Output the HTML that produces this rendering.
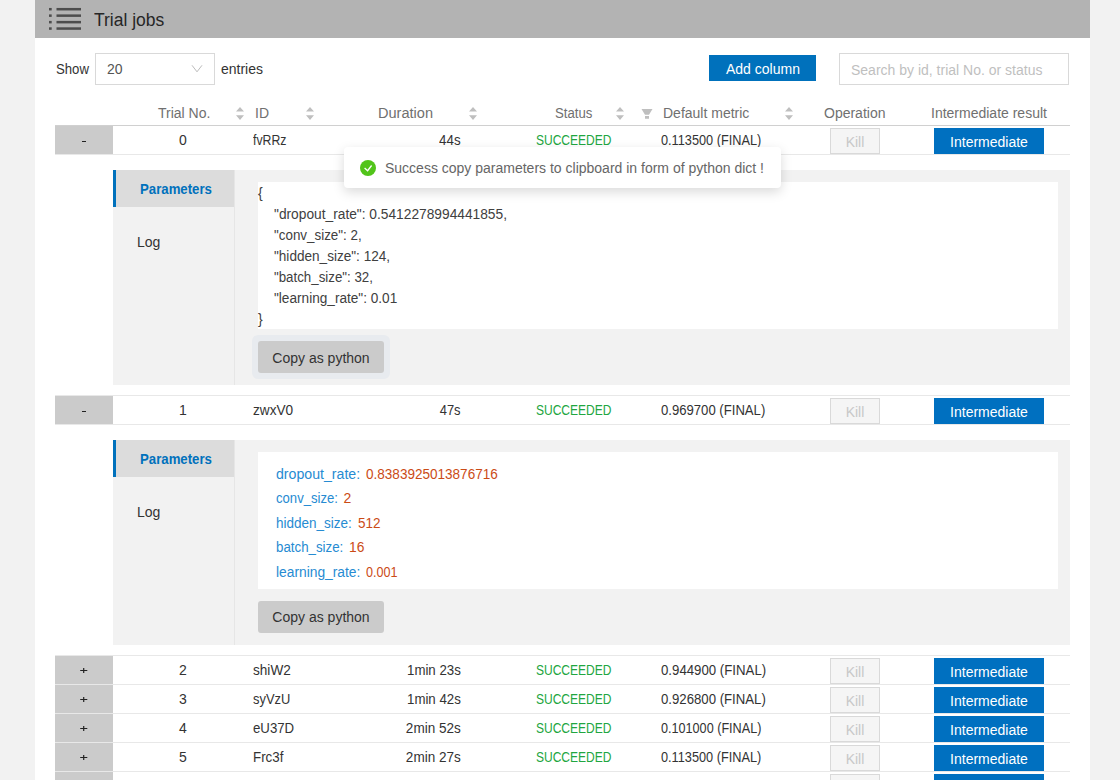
<!DOCTYPE html>
<html><head><meta charset="utf-8">
<style>
*{margin:0;padding:0;box-sizing:border-box}
html,body{width:1120px;height:780px;overflow:hidden;background:#f2f2f2;font-family:"Liberation Sans",sans-serif;font-size:14px;color:#333}
.a{position:absolute}
.t{position:absolute;white-space:nowrap;line-height:16px;font-size:14px}
.r{text-align:right}
#card{position:absolute;left:35px;top:0;width:1055px;height:780px;background:#fff}
#hdr{position:absolute;left:35px;top:0;width:1055px;height:38px;background:#b3b3b3}
.dot{position:absolute;left:49px;width:3px;height:3px;background:#555}
.ln{position:absolute;left:56px;width:25px;height:3px;background:#555}
.hb{position:absolute;left:55px;width:1015px;height:1px;background:#e8e8e8}
.ex{position:absolute;left:55px;width:58px;height:28px;background:#cbcbcb;text-align:center;line-height:28px;color:#333}
.kill{position:absolute;left:830px;width:50px;height:26px;border:1px solid #d9d9d9;background:#f5f5f5;color:#c8c8c8;text-align:center;line-height:26px;font-size:14px}
.imd{position:absolute;left:934px;width:110px;height:26px;background:#0070c0;color:#fff;text-align:center;line-height:28px;font-size:14px}
.sort{position:absolute;width:8px;height:13px}
.hd{color:#707070}
.succ{color:#21a640}
.panel{position:absolute;left:113px;width:957px;background:#f2f2f2}
.tabsel{position:absolute;left:0;top:0;width:121px;height:37px;background:#dcdcdc;border-left:3px solid #0071bc}
.tabsep{position:absolute;left:121px;top:0;width:1px;background:#e6e6e6}
.cbox{position:absolute;left:145px;width:800px;background:#fff}
.copy{position:absolute;left:145px;width:126px;height:32px;background:#cbcbcb;border-radius:3px;color:#333;text-align:center;line-height:34px}
.k{color:#268bd2}.v{color:#cb4b16}
</style></head><body>
<div id="card"></div>
<div id="hdr"></div>

<svg class="a" style="left:45px;top:0px" width="40" height="36" viewBox="0 0 40 36"><g fill="#4d4d4d"><rect x="4" y="7.95" width="2.7" height="2.5"/><rect x="11.5" y="7.95" width="24.5" height="2.5"/><rect x="4" y="14.40" width="2.7" height="2.5"/><rect x="11.5" y="14.40" width="24.5" height="2.5"/><rect x="4" y="20.90" width="2.7" height="2.5"/><rect x="11.5" y="20.90" width="24.5" height="2.5"/><rect x="4" y="27.30" width="2.7" height="2.5"/><rect x="11.5" y="27.30" width="24.5" height="2.5"/></g></svg>
<div class="t" style="left:94.4px;top:10px;font-size:18px;line-height:20px;color:#262626"><span style="display:inline-block;transform:scaleX(0.972);transform-origin:left">Trial jobs</span></div>
<div class="t" style="left:56px;top:61px"><span style="display:inline-block;transform:scaleX(0.94);transform-origin:left">Show</span></div>
<div class="a" style="left:95px;top:53px;width:120px;height:32px;border:1px solid #d9d9d9;background:#fff"></div>
<div class="t" style="left:107px;top:61px;color:#555">20</div>
<svg class="a" style="left:191px;top:65px" width="12" height="8" viewBox="0 0 12 8"><path d="M1 0.3 L6 6.8 L11 0.3" fill="none" stroke="#bbb" stroke-width="1"/></svg>
<div class="t" style="left:221px;top:61px">entries</div>
<div class="a" style="left:709px;top:55px;width:107px;height:26px;background:#0071bc"></div>
<div class="t" style="left:726px;top:61px;color:#fff">Add column</div>
<div class="a" style="left:839px;top:53px;width:230px;height:32px;border:1px solid #d9d9d9;background:#fff"></div>
<div class="t" style="left:851px;top:62px;color:#bfbfbf">Search by id, trial No. or status</div>
<div class="t hd" style="left:158px;top:105px">Trial No.</div>
<div class="t hd" style="left:255px;top:105px">ID</div>
<div class="t hd" style="left:378px;top:105px"><span style="display:inline-block;transform:scaleX(1.04);transform-origin:left">Duration</span></div>
<div class="t hd" style="left:555px;top:105px"><span style="display:inline-block;transform:scaleX(0.94);transform-origin:left">Status</span></div>
<div class="t hd" style="left:663px;top:105px">Default metric</div>
<div class="t hd" style="left:824px;top:105px">Operation</div>
<div class="t hd" style="left:931px;top:105px">Intermediate result</div>
<svg class="sort" style="left:236px;top:107px" viewBox="0 0 8 13"><path d="M4 0 L8 4.6 L0 4.6Z M4 13 L8 8.3 L0 8.3Z" fill="#bfbfbf"/></svg>
<svg class="sort" style="left:306px;top:107px" viewBox="0 0 8 13"><path d="M4 0 L8 4.6 L0 4.6Z M4 13 L8 8.3 L0 8.3Z" fill="#bfbfbf"/></svg>
<svg class="sort" style="left:468.5px;top:107px" viewBox="0 0 8 13"><path d="M4 0 L8 4.6 L0 4.6Z M4 13 L8 8.3 L0 8.3Z" fill="#bfbfbf"/></svg>
<svg class="sort" style="left:616px;top:107px" viewBox="0 0 8 13"><path d="M4 0 L8 4.6 L0 4.6Z M4 13 L8 8.3 L0 8.3Z" fill="#bfbfbf"/></svg>
<svg class="sort" style="left:784.5px;top:107px" viewBox="0 0 8 13"><path d="M4 0 L8 4.6 L0 4.6Z M4 13 L8 8.3 L0 8.3Z" fill="#bfbfbf"/></svg>
<svg class="a" style="left:641px;top:109px" width="12" height="10" viewBox="0 0 12 10"><path d="M0.5 0 H11.5 L8 5.7 H4Z M4 7 H8 V9.8 H4Z" fill="#bfbfbf"/></svg>
<div class="hb" style="top:125px;background:#d0d0d0"></div>

<div class="ex" style="top:126px"></div>
<div class="a" style="left:82px;top:141px;width:4px;height:1px;background:#222"></div>
<div class="t" style="left:113px;width:140px;text-align:center;top:132px">0</div>
<div class="t" style="left:253px;top:132px"><span style="display:inline-block;transform:scaleX(0.878);transform-origin:left">fvRRz</span></div>
<div class="t r" style="left:361px;width:100px;top:132px"><span style="display:inline-block;transform:scaleX(0.952);transform-origin:right">44s</span></div>
<div class="t succ" style="left:536px;top:132px"><span style="display:inline-block;transform:scaleX(0.858);transform-origin:left">SUCCEEDED</span></div>
<div class="t" style="left:661px;top:132px"><span style="display:inline-block;transform:scaleX(0.91);transform-origin:left">0.113500 (FINAL)</span></div>
<div class="kill" style="top:128px">Kill</div>
<div class="imd" style="top:128px">Intermediate</div>
<div class="hb" style="top:154px"></div>
<div class="panel" style="top:170px;height:215px">
  <div class="tabsel"></div>
  <div class="tabsep" style="height:215px"></div>
  <div class="cbox" style="top:12px;height:147px"></div>
  <div class="a" style="left:139px;top:165px;width:138px;height:44px;background:#e8ebef;border-radius:6px"></div>
  <div class="copy" style="top:171px">Copy as python</div>
</div>
<div class="t" style="left:140px;top:181px;color:#0071bc;font-weight:bold"><span style="display:inline-block;transform:scaleX(0.943);transform-origin:left">Parameters</span></div>
<div class="t" style="left:137px;top:234px">Log</div>
<div class="t" style="left:258px;top:185px;color:#404040">{</div>
<div class="t" style="left:274px;top:206px;color:#404040"><span style="display:inline-block;transform:scaleX(0.982);transform-origin:left">"dropout_rate": 0.5412278994441855,</span></div>
<div class="t" style="left:274px;top:227px;color:#404040"><span style="display:inline-block;transform:scaleX(0.956);transform-origin:left">"conv_size": 2,</span></div>
<div class="t" style="left:274px;top:248px;color:#404040"><span style="display:inline-block;transform:scaleX(0.97);transform-origin:left">"hidden_size": 124,</span></div>
<div class="t" style="left:274px;top:269px;color:#404040"><span style="display:inline-block;transform:scaleX(0.95);transform-origin:left">"batch_size": 32,</span></div>
<div class="t" style="left:274px;top:290px;color:#404040"><span style="display:inline-block;transform:scaleX(0.973);transform-origin:left">"learning_rate": 0.01</span></div>
<div class="t" style="left:258px;top:311px;color:#404040">}</div>
<div class="hb" style="top:395px"></div>
<div class="ex" style="top:396px"></div>
<div class="a" style="left:82px;top:411px;width:4px;height:1px;background:#222"></div>
<div class="t" style="left:113px;width:140px;text-align:center;top:402px">1</div>
<div class="t" style="left:253px;top:402px"><span style="display:inline-block;transform:scaleX(0.974);transform-origin:left">zwxV0</span></div>
<div class="t r" style="left:361px;width:100px;top:402px"><span style="display:inline-block;transform:scaleX(0.924);transform-origin:right">47s</span></div>
<div class="t succ" style="left:536px;top:402px"><span style="display:inline-block;transform:scaleX(0.858);transform-origin:left">SUCCEEDED</span></div>
<div class="t" style="left:661px;top:402px"><span style="display:inline-block;transform:scaleX(0.937);transform-origin:left">0.969700 (FINAL)</span></div>
<div class="kill" style="top:398px">Kill</div>
<div class="imd" style="top:398px">Intermediate</div>
<div class="hb" style="top:424px"></div>
<div class="panel" style="top:440px;height:205px">
  <div class="tabsel"></div>
  <div class="tabsep" style="height:205px"></div>
  <div class="cbox" style="top:12px;height:137px"></div>
  <div class="copy" style="top:161px;line-height:32px">Copy as python</div>
</div>
<div class="t" style="left:140px;top:451px;color:#0071bc;font-weight:bold"><span style="display:inline-block;transform:scaleX(0.943);transform-origin:left">Parameters</span></div>
<div class="t" style="left:137px;top:504px">Log</div>
<div class="t k" style="left:276px;top:466.0px"><span style="display:inline-block;transform:scaleX(1.01);transform-origin:left">dropout_rate:</span></div>
<div class="t v" style="left:366px;top:466.0px"><span style="display:inline-block;transform:scaleX(0.967);transform-origin:left">0.8383925013876716</span></div>
<div class="t k" style="left:276px;top:490.4px"><span style="display:inline-block;transform:scaleX(0.936);transform-origin:left">conv_size:</span></div>
<div class="t v" style="left:343.5px;top:490.4px"><span style="display:inline-block;transform:scaleX(1);transform-origin:left">2</span></div>
<div class="t k" style="left:276px;top:514.8px"><span style="display:inline-block;transform:scaleX(0.965);transform-origin:left">hidden_size:</span></div>
<div class="t v" style="left:357.5px;top:514.8px"><span style="display:inline-block;transform:scaleX(0.963);transform-origin:left">512</span></div>
<div class="t k" style="left:276px;top:539.2px"><span style="display:inline-block;transform:scaleX(0.95);transform-origin:left">batch_size:</span></div>
<div class="t v" style="left:348.8px;top:539.2px"><span style="display:inline-block;transform:scaleX(0.987);transform-origin:left">16</span></div>
<div class="t k" style="left:276px;top:563.6px"><span style="display:inline-block;transform:scaleX(0.985);transform-origin:left">learning_rate:</span></div>
<div class="t v" style="left:366px;top:563.6px"><span style="display:inline-block;transform:scaleX(0.901);transform-origin:left">0.001</span></div>
<div class="hb" style="top:655px"></div>
<div class="ex" style="top:656px"></div>
<svg class="a" style="left:78px;top:666px" width="12" height="10" viewBox="0 0 12 10"><rect x="2.2" y="4" width="7.1" height="1" fill="#222"/><rect x="5.1" y="2" width="1.2" height="5" fill="#222"/></svg>
<div class="t" style="left:113px;width:140px;text-align:center;top:662px">2</div>
<div class="t" style="left:253px;top:662px"><span style="display:inline-block;transform:scaleX(0.972);transform-origin:left">shiW2</span></div>
<div class="t r" style="left:361px;width:100px;top:662px"><span style="display:inline-block;transform:scaleX(0.947);transform-origin:right">1min 23s</span></div>
<div class="t succ" style="left:536px;top:662px"><span style="display:inline-block;transform:scaleX(0.858);transform-origin:left">SUCCEEDED</span></div>
<div class="t" style="left:661px;top:662px"><span style="display:inline-block;transform:scaleX(0.945);transform-origin:left">0.944900 (FINAL)</span></div>
<div class="kill" style="top:658px">Kill</div>
<div class="imd" style="top:658px">Intermediate</div>
<div class="hb" style="top:684px"></div>
<div class="hb" style="top:684px"></div>
<div class="ex" style="top:685px"></div>
<svg class="a" style="left:78px;top:695px" width="12" height="10" viewBox="0 0 12 10"><rect x="2.2" y="4" width="7.1" height="1" fill="#222"/><rect x="5.1" y="2" width="1.2" height="5" fill="#222"/></svg>
<div class="t" style="left:113px;width:140px;text-align:center;top:691px">3</div>
<div class="t" style="left:253px;top:691px"><span style="display:inline-block;transform:scaleX(0.921);transform-origin:left">syVzU</span></div>
<div class="t r" style="left:361px;width:100px;top:691px"><span style="display:inline-block;transform:scaleX(0.947);transform-origin:right">1min 42s</span></div>
<div class="t succ" style="left:536px;top:691px"><span style="display:inline-block;transform:scaleX(0.858);transform-origin:left">SUCCEEDED</span></div>
<div class="t" style="left:661px;top:691px"><span style="display:inline-block;transform:scaleX(0.942);transform-origin:left">0.926800 (FINAL)</span></div>
<div class="kill" style="top:687px">Kill</div>
<div class="imd" style="top:687px">Intermediate</div>
<div class="hb" style="top:713px"></div>
<div class="hb" style="top:713px"></div>
<div class="ex" style="top:714px"></div>
<svg class="a" style="left:78px;top:724px" width="12" height="10" viewBox="0 0 12 10"><rect x="2.2" y="4" width="7.1" height="1" fill="#222"/><rect x="5.1" y="2" width="1.2" height="5" fill="#222"/></svg>
<div class="t" style="left:113px;width:140px;text-align:center;top:720px">4</div>
<div class="t" style="left:253px;top:720px"><span style="display:inline-block;transform:scaleX(0.944);transform-origin:left">eU37D</span></div>
<div class="t r" style="left:361px;width:100px;top:720px"><span style="display:inline-block;transform:scaleX(0.967);transform-origin:right">2min 52s</span></div>
<div class="t succ" style="left:536px;top:720px"><span style="display:inline-block;transform:scaleX(0.858);transform-origin:left">SUCCEEDED</span></div>
<div class="t" style="left:661px;top:720px"><span style="display:inline-block;transform:scaleX(0.902);transform-origin:left">0.101000 (FINAL)</span></div>
<div class="kill" style="top:716px">Kill</div>
<div class="imd" style="top:716px">Intermediate</div>
<div class="hb" style="top:742px"></div>
<div class="hb" style="top:742px"></div>
<div class="ex" style="top:743px"></div>
<svg class="a" style="left:78px;top:753px" width="12" height="10" viewBox="0 0 12 10"><rect x="2.2" y="4" width="7.1" height="1" fill="#222"/><rect x="5.1" y="2" width="1.2" height="5" fill="#222"/></svg>
<div class="t" style="left:113px;width:140px;text-align:center;top:749px">5</div>
<div class="t" style="left:253px;top:749px"><span style="display:inline-block;transform:scaleX(0.953);transform-origin:left">Frc3f</span></div>
<div class="t r" style="left:361px;width:100px;top:749px"><span style="display:inline-block;transform:scaleX(0.967);transform-origin:right">2min 27s</span></div>
<div class="t succ" style="left:536px;top:749px"><span style="display:inline-block;transform:scaleX(0.858);transform-origin:left">SUCCEEDED</span></div>
<div class="t" style="left:661px;top:749px"><span style="display:inline-block;transform:scaleX(0.91);transform-origin:left">0.113500 (FINAL)</span></div>
<div class="kill" style="top:745px">Kill</div>
<div class="imd" style="top:745px">Intermediate</div>
<div class="hb" style="top:771px"></div>
<div class="ex" style="top:772px"></div><div class="kill" style="top:774px"></div><div class="imd" style="top:774px"></div>
<div class="a" style="left:344px;top:147px;width:437px;height:41px;background:#fff;border-radius:4px;box-shadow:0 4px 12px rgba(0,0,0,0.15)"></div>
<svg class="a" style="left:360px;top:160px" width="16" height="16" viewBox="0 0 16 16"><circle cx="8" cy="8" r="8" fill="#52c41a"/><path d="M4.6 8.0 L7.6 10.7 L11.6 5.5" fill="none" stroke="#fff" stroke-width="1.3"/></svg>
<div class="t" style="left:385px;top:160px;color:#666">Success copy parameters to clipboard in form of python dict !</div>
</body></html>
